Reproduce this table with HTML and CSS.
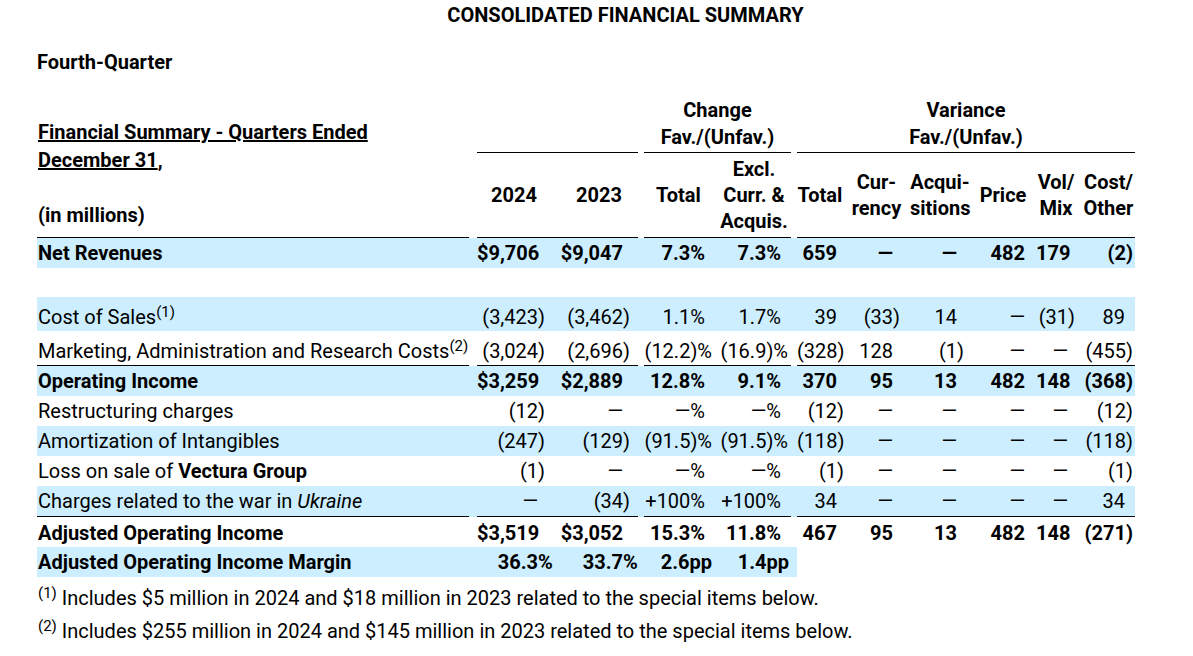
FILE: index.html
```html
<!DOCTYPE html>
<html lang="en">
<head>
    <meta charset="UTF-8">
    <meta name="viewport" content="width=device-width, initial-scale=1.0">
    <title>Consolidated Financial Summary</title>
    <link rel="stylesheet" href="styles.css">
</head>
<body>
    <div class="page">
        <div class="title">CONSOLIDATED FINANCIAL SUMMARY</div>
        <div class="period">Fourth-Quarter</div>

        <table class="summary">
            <colgroup>
                <col class="w-label">
                <col class="w-sp8">
                <col class="w-y24">
                <col class="w-y23">
                <col class="w-sp6">
                <col class="w-cht">
                <col class="w-che">
                <col class="w-sp6">
                <col class="w-vt">
                <col class="w-cur">
                <col class="w-acq">
                <col class="w-price">
                <col class="w-vol">
                <col class="w-cost">
            </colgroup>
            <thead>
                <tr class="group-row">
                    <th class="label-head" rowspan="2">
                        <u>Financial Summary - Quarters Ended</u><br><u>December 31</u>,<br><br>(in millions)
                    </th>
                    <th class="sp"></th>
                    <th class="grp" colspan="2"></th>
                    <th class="sp"></th>
                    <th class="grp" colspan="2">Change<br>Fav./(Unfav.)</th>
                    <th class="sp"></th>
                    <th class="grp" colspan="6">Variance<br>Fav./(Unfav.)</th>
                </tr>
                <tr class="col-row">
                    <th class="sp"></th>
                    <th class="yr y24">2024</th>
                    <th class="yr y23">2023</th>
                    <th class="sp"></th>
                    <th class="cht-head">Total</th>
                    <th>Excl.<br>Curr. &amp;<br>Acquis.</th>
                    <th class="sp"></th>
                    <th>Total</th>
                    <th>Cur-<br>rency</th>
                    <th>Acqui-<br>sitions</th>
                    <th>Price</th>
                    <th>Vol/<br>Mix</th>
                    <th class="cost-head">Cost/<br>Other</th>
                </tr>
            </thead>
            <tbody>
                <tr class="hl bold">
                    <td class="lbl">Net Revenues</td><td></td>
                    <td class="y24">$9,706</td><td class="y23">$9,047</td><td></td>
                    <td class="cht">7.3%</td><td class="che">7.3%</td><td></td>
                    <td class="vt">659</td><td class="cur">—</td><td class="acq">—</td><td class="price">482</td><td class="vol">179</td><td class="cost">(2<span class="rp">)</span></td>
                </tr>
                <tr class="gap"><td colspan="14"></td></tr>
                <tr class="hl tall">
                    <td class="lbl">Cost of Sales<sup>(1)</sup></td><td></td>
                    <td class="y24">(3,423<span class="rp">)</span></td><td class="y23">(3,462<span class="rp">)</span></td><td></td>
                    <td class="cht">1.1%</td><td class="che">1.7%</td><td></td>
                    <td class="vt">39</td><td class="cur">(33<span class="rp">)</span></td><td class="acq">14</td><td class="price">—</td><td class="vol">(31<span class="rp">)</span></td><td class="cost">89</td>
                </tr>
                <tr class="tall line">
                    <td class="lbl">Marketing, Administration and Research Costs<sup>(2)</sup></td><td></td>
                    <td class="y24">(3,024<span class="rp">)</span></td><td class="y23">(2,696<span class="rp">)</span></td><td></td>
                    <td class="cht">(12.2<span class="rp">)%</span></td><td class="che">(16.9<span class="rp">)%</span></td><td></td>
                    <td class="vt">(328<span class="rp">)</span></td><td class="cur">128</td><td class="acq">(1<span class="rp">)</span></td><td class="price">—</td><td class="vol">—</td><td class="cost">(455<span class="rp">)</span></td>
                </tr>
                <tr class="hl bold">
                    <td class="lbl">Operating Income</td><td></td>
                    <td class="y24">$3,259</td><td class="y23">$2,889</td><td></td>
                    <td class="cht">12.8%</td><td class="che">9.1%</td><td></td>
                    <td class="vt">370</td><td class="cur">95</td><td class="acq">13</td><td class="price">482</td><td class="vol">148</td><td class="cost">(368<span class="rp">)</span></td>
                </tr>
                <tr>
                    <td class="lbl">Restructuring charges</td><td></td>
                    <td class="y24">(12<span class="rp">)</span></td><td class="y23">—</td><td></td>
                    <td class="cht">—%</td><td class="che">—%</td><td></td>
                    <td class="vt">(12<span class="rp">)</span></td><td class="cur">—</td><td class="acq">—</td><td class="price">—</td><td class="vol">—</td><td class="cost">(12<span class="rp">)</span></td>
                </tr>
                <tr class="hl">
                    <td class="lbl">Amortization of Intangibles</td><td></td>
                    <td class="y24">(247<span class="rp">)</span></td><td class="y23">(129<span class="rp">)</span></td><td></td>
                    <td class="cht">(91.5<span class="rp">)%</span></td><td class="che">(91.5<span class="rp">)%</span></td><td></td>
                    <td class="vt">(118<span class="rp">)</span></td><td class="cur">—</td><td class="acq">—</td><td class="price">—</td><td class="vol">—</td><td class="cost">(118<span class="rp">)</span></td>
                </tr>
                <tr>
                    <td class="lbl">Loss on sale of <b>Vectura Group</b></td><td></td>
                    <td class="y24">(1<span class="rp">)</span></td><td class="y23">—</td><td></td>
                    <td class="cht">—%</td><td class="che">—%</td><td></td>
                    <td class="vt">(1<span class="rp">)</span></td><td class="cur">—</td><td class="acq">—</td><td class="price">—</td><td class="vol">—</td><td class="cost">(1<span class="rp">)</span></td>
                </tr>
                <tr class="hl line">
                    <td class="lbl">Charges related to the war in <i>Ukraine</i></td><td></td>
                    <td class="y24">—</td><td class="y23">(34<span class="rp">)</span></td><td></td>
                    <td class="cht">+100%</td><td class="che">+100%</td><td></td>
                    <td class="vt">34</td><td class="cur">—</td><td class="acq">—</td><td class="price">—</td><td class="vol">—</td><td class="cost">34</td>
                </tr>
                <tr class="bold post">
                    <td class="lbl">Adjusted Operating Income</td><td></td>
                    <td class="y24">$3,519</td><td class="y23">$3,052</td><td></td>
                    <td class="cht">15.3%</td><td class="che">11.8%</td><td></td>
                    <td class="vt">467</td><td class="cur">95</td><td class="acq">13</td><td class="price">482</td><td class="vol">148</td><td class="cost">(271<span class="rp">)</span></td>
                </tr>
                <tr class="bold margin-row">
                    <td class="lbl">Adjusted Operating Income Margin</td><td></td>
                    <td class="y24">36.3<span class="pc">%</span></td><td class="y23">33.7<span class="pc">%</span></td><td></td>
                    <td class="cht">2.6pp</td><td class="che">1.4pp</td><td></td>
                    <td class="blank" colspan="6"></td>
                </tr>
            </tbody>
        </table>

        <p class="note first"><sup>(1)</sup> Includes $5 million in 2024 and $18 million in 2023 related to the special items below.</p>
        <p class="note"><sup>(2)</sup> Includes $255 million in 2024 and $145 million in 2023 related to the special items below.</p>
    </div>
</body>
</html>
```

FILE: styles.css
```css
body {
    margin: 0;
    padding: 0;
    background: #fff;
    color: #000;
    font-family: Roboto, 'Liberation Sans', sans-serif;
    font-size: 20px;
}
.page {
    padding: 0 0 0 37px;
}
.title {
    font-weight: 700;
    line-height: 30px;
    text-align: center;
    padding-left: 21px;
}
.period {
    font-weight: 700;
    margin-top: 17px;
    line-height: 30px;
}
.summary {
    margin-top: 20px;
    width: 1098px;
    table-layout: fixed;
    border-collapse: collapse;
}
.w-label { width: 432px; }
.w-sp8 { width: 8px; }
.w-sp6 { width: 6px; }
.w-y24 { width: 69px; }
.w-y23 { width: 92px; }
.w-cht { width: 73px; }
.w-che { width: 74px; }
.w-vt { width: 46px; }
.w-cur { width: 67px; }
.w-acq { width: 60px; }
.w-price { width: 66px; }
.w-vol { width: 40px; }
.w-cost { width: 59px; }

th {
    font-weight: 700;
    line-height: 26px;
    padding: 0;
    text-align: center;
    white-space: nowrap;
}
.label-head {
    text-align: left;
    vertical-align: bottom;
    line-height: 27.5px;
    padding: 0 0 8px 1px;
    border-bottom: 1px solid #000;
}
.group-row .grp {
    vertical-align: bottom;
    line-height: 27px;
    padding-bottom: 1px;
    border-bottom: 1px solid #000;
}
.col-row th {
    vertical-align: middle;
    padding: 3px 0 3px 0;
    border-bottom: 1px solid #000;
}
.col-row th.sp {
    border-bottom: none;
}
.col-row .yr {
    text-align: right;
}
.col-row .yr.y24 { padding-right: 9px; }
.col-row .yr.y23 { padding-right: 16px; }
.col-row .cht-head { padding-right: 4px; }
.col-row .cost-head { padding-left: 6px; }

td {
    padding: 2px 0;
    line-height: 26px;
    text-align: right;
    white-space: nowrap;
}
td.lbl {
    text-align: left;
    padding-left: 1px;
}
.hl td {
    background: #cceeff;
}
.bold td {
    font-weight: 700;
}
.line td {
    border-bottom: 1px solid #000;
}
.line td:nth-child(2),
.line td:nth-child(5),
.line td:nth-child(8) {
    border-bottom: none;
}
.tall td {
    padding-top: 7px;
    padding-bottom: 1px;
}
.post td {
    padding-top: 3px;
    padding-bottom: 1px;
}
.gap td {
    height: 29px;
    padding: 0;
}
sup {
    font-size: 15px;
    line-height: 0;
    vertical-align: 7px;
}

.y24 { padding-right: 8px; }
.y23 { padding-right: 15px; }
.cht { padding-right: 12px; }
.che { padding-right: 10px; }
.vt { padding-right: 6px; }
.cur { padding-right: 17px; }
.acq { padding-right: 13px; }
.price { padding-right: 11px; }
.vol { padding-right: 8px; }
.cost { padding-right: 10px; }

.rp {
    margin-right: -7px;
}
.cost .rp {
    margin-right: -8px;
}
.pc {
    display: inline-block;
    width: 0;
}

.margin-row td {
    background: #cceeff;
}
.margin-row td.blank {
    background: #fff;
}
.margin-row .cht { padding-right: 5px; }
.margin-row .che { padding-right: 2px; }

.note {
    margin: 0;
    line-height: 33px;
    padding-left: 1px;
}
.note.first {
    margin-top: 5px;
}
```
